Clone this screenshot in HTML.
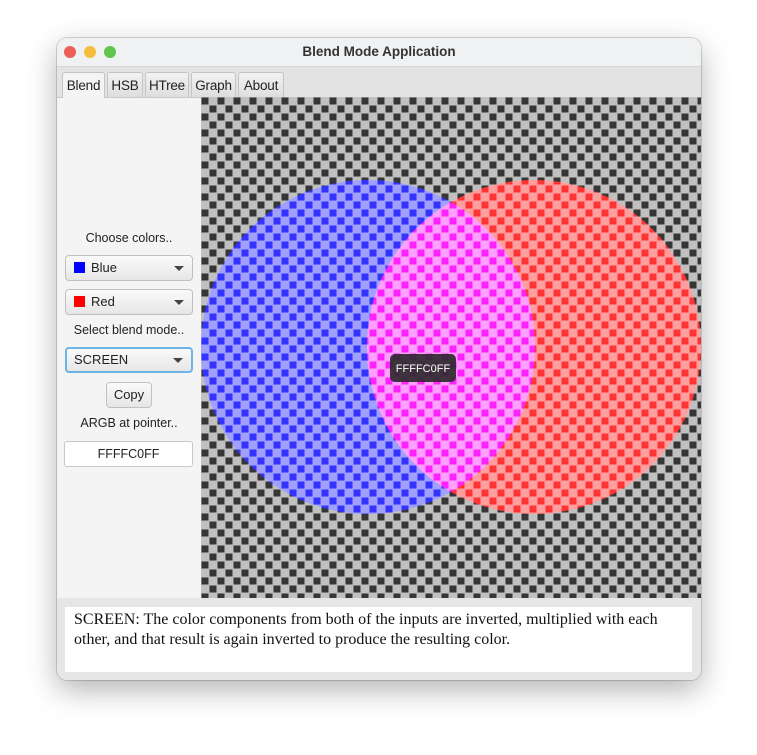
<!DOCTYPE html>
<html><head><style>
body{margin:0;width:757px;height:755px;background:#fff;position:relative;overflow:hidden;font-family:"Liberation Sans",sans-serif;}
.win{position:absolute;left:57px;top:38px;width:644px;height:642px;border-radius:10px;overflow:hidden;background:#f2f2f2;box-shadow:0 10px 30px rgba(0,0,0,.3),0 0 0 1px rgba(0,0,0,.15);}
.title{position:absolute;left:0;top:0;width:644px;height:28px;background:#f0f1f3;border-bottom:1px solid #d6d6d6;text-align:center;font-weight:bold;font-size:13.5px;line-height:27px;color:#333;}
.dot{position:absolute;top:8px;width:12px;height:12px;border-radius:50%;}
.tabs{position:absolute;left:0;top:29px;width:644px;height:30px;background:#e3e3e3;border-bottom:1px solid #c8c8c8;}
.tab{position:absolute;top:5px;height:25px;border:1px solid #c4c4c4;border-bottom:none;border-radius:3px 3px 0 0;background:linear-gradient(#f2f2f2,#dedede);font-size:13.5px;line-height:25px;text-align:center;color:#222;box-sizing:border-box;letter-spacing:-0.2px;}
.left{position:absolute;left:0;top:60px;width:144px;height:500px;background:#f4f4f4;}
.lbl{position:absolute;left:0;width:144px;text-align:center;font-size:12.5px;color:#222;}
.cb{position:absolute;left:8px;width:128px;height:26px;box-sizing:border-box;border:1px solid #c0c0c0;border-radius:4px;background:linear-gradient(#fafafa,#e6e6e6);font-size:13px;line-height:24px;color:#222;}
.cb .sw{position:absolute;left:8px;top:6px;width:11px;height:11px;}
.cb .t{position:absolute;left:25px;}
.cb .ar{position:absolute;right:8px;top:10px;width:0;height:0;border-left:5px solid transparent;border-right:5px solid transparent;border-top:5px solid #444;}
.bottom{position:absolute;left:0;top:560px;width:644px;height:82px;background:#e6e6e6;}
.ta{position:absolute;left:8px;top:9px;width:627px;height:65px;background:#fff;font-family:"Liberation Serif",serif;font-size:16px;line-height:20px;color:#111;padding:3px 9px;box-sizing:border-box;}
</style></head><body>
<div class="win">
<div class="title">Blend Mode Application
<div class="dot" style="left:7px;background:#ee5f57"></div>
<div class="dot" style="left:27px;background:#f6bd3b"></div>
<div class="dot" style="left:47px;background:#5fc54b"></div>
</div>
<div class="tabs">
<div class="tab" style="left:5px;width:43px;background:#f4f4f4;height:26px">Blend</div>
<div class="tab" style="left:50px;width:36px">HSB</div>
<div class="tab" style="left:88px;width:44px">HTree</div>
<div class="tab" style="left:134px;width:45px">Graph</div>
<div class="tab" style="left:181px;width:46px">About</div>
</div>
<div class="left">
<div class="lbl" style="top:133px">Choose colors..</div>
<div class="cb" style="top:157px"><div class="sw" style="background:#00f"></div><span class="t">Blue</span><div class="ar"></div></div>
<div class="cb" style="top:191px"><div class="sw" style="background:#f00"></div><span class="t">Red</span><div class="ar"></div></div>
<div class="lbl" style="top:225px">Select blend mode..</div>
<div class="cb" style="top:249px;border:2px solid #6cb4e6;line-height:22px"><span class="t" style="left:7px">SCREEN</span><div class="ar" style="top:9px"></div></div>
<div class="cb" style="top:284px;left:49px;width:46px;text-align:center">Copy</div>
<div class="lbl" style="top:318px">ARGB at pointer..</div>
<div style="position:absolute;left:7px;top:343px;width:129px;height:26px;box-sizing:border-box;background:#fff;border:1px solid #c8c8c8;border-radius:3px;text-align:center;font-size:12.5px;line-height:24px;color:#222">FFFFC0FF</div>
</div>
<svg style="position:absolute;left:144px;top:59px" width="500" height="501">
<defs>
<pattern id="pg" width="16" height="16" patternUnits="userSpaceOnUse"><rect width="16" height="16" fill="#c0c0c0"/><rect x="0.5" y="0.5" width="7" height="7" fill="#363636"/><rect x="8.5" y="8.5" width="7" height="7" fill="#363636"/></pattern>
<pattern id="pb" width="16" height="16" patternUnits="userSpaceOnUse"><rect width="16" height="16" fill="#a0a0ff"/><rect x="0.5" y="0.5" width="7" height="7" fill="#3434ff"/><rect x="8.5" y="8.5" width="7" height="7" fill="#3434ff"/></pattern>
<pattern id="pr" width="16" height="16" patternUnits="userSpaceOnUse"><rect width="16" height="16" fill="#ff9e9e"/><rect x="0.5" y="0.5" width="7" height="7" fill="#ff3434"/><rect x="8.5" y="8.5" width="7" height="7" fill="#ff3434"/></pattern>
<pattern id="pm" width="16" height="16" patternUnits="userSpaceOnUse"><rect width="16" height="16" fill="#ffa0ff"/><rect x="0.5" y="0.5" width="7" height="7" fill="#ff22ff"/><rect x="8.5" y="8.5" width="7" height="7" fill="#ff22ff"/></pattern>
<clipPath id="cbl"><circle cx="167" cy="250" r="167"/></clipPath>
</defs>
<rect width="500" height="501" fill="url(#pg)"/>
<circle cx="167" cy="250" r="167" fill="url(#pb)"/>
<circle cx="333" cy="250" r="167" fill="url(#pr)"/>
<circle cx="333" cy="250" r="167" fill="url(#pm)" clip-path="url(#cbl)"/>
<rect x="189" y="257" width="66" height="28" rx="5" fill="#2e2a2e" opacity="0.92"/>
<text x="222" y="275" text-anchor="middle" font-family="Liberation Sans" font-size="11" fill="#fff">FFFFC0FF</text>
</svg>
<div class="bottom"><div class="ta">SCREEN: The color components from both of the inputs are inverted, multiplied with each other, and that result is again inverted to produce the resulting color.</div></div>
</div>
</body></html>
